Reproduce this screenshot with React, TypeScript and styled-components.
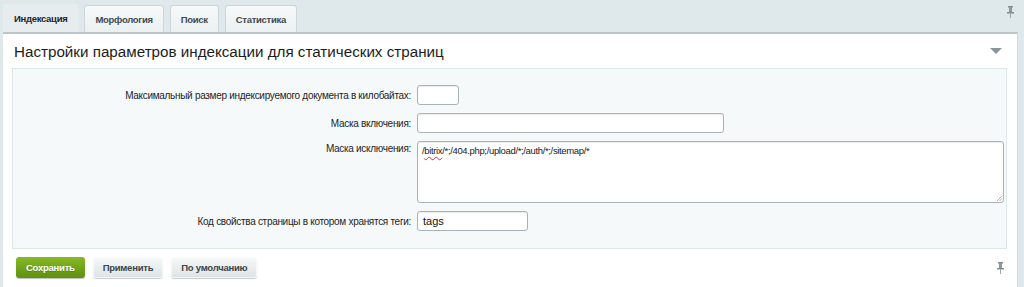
import React from "react";
import styled, { createGlobalStyle } from "styled-components";

const GlobalStyle = createGlobalStyle`
  html, body {
    margin: 0;
    padding: 0;
    background: #dfe8ea;
    font-family: "Liberation Sans", Arial, Helvetica, sans-serif;
  }
`;

const Page = styled.div`
  width: 1024px;
  height: 287px;
  overflow: hidden;
  padding: 0 6px 0 3px;
  box-sizing: border-box;
  background: #dfe8ea;
`;

const TabBar = styled.div`
  height: 32px;
  display: flex;
  align-items: flex-end;
  gap: 6px;
  position: relative;
`;

const Tab = styled.div<{ active?: boolean }>`
  height: ${(p) => (p.active ? "28px" : "27px")};
  padding: 0 10px;
  display: flex;
  align-items: center;
  box-sizing: border-box;
  font-size: 9.5px;
  letter-spacing: -0.3px;
  font-weight: bold;
  color: ${(p) => (p.active ? "#1f2529" : "#3f4b4f")};
  background: ${(p) =>
    p.active ? "#e7edee" : "linear-gradient(#f7f9f9, #ebf0f0)"};
  border: 1px solid ${(p) => (p.active ? "#e7edee" : "#cdd6d8")};
  border-bottom: none;
  border-radius: 3px 3px 0 0;
`;

const Pin = styled.svg`
  display: block;
  width: 7px;
  height: 12px;
`;

const TopPin = styled.div`
  position: absolute;
  right: 4px;
  top: 6px;
`;

const Panel = styled.div`
  background: #fff;
  border-top: 2px solid #bcc6c9;
  border-right: 1px solid #d3dcde;
  height: 255px;
  box-sizing: border-box;
  padding: 0 10px 0 9px;
  display: flex;
  flex-direction: column;
`;

const Heading = styled.div`
  height: 34px;
  display: flex;
  align-items: center;
  justify-content: space-between;
  padding: 0 5px 0 2px;
  font-size: 15.2px;
  color: #1d1d1d;
`;

const Triangle = styled.div`
  width: 0;
  height: 0;
  border-left: 6px solid transparent;
  border-right: 6px solid transparent;
  border-top: 6px solid #8c969a;
`;

const FormBox = styled.div`
  background: #f5f9f9;
  border: 1px solid #dde6e8;
  padding: 16px 0 17px;
  display: flex;
  flex-direction: column;
  gap: 8px;
`;

const Row = styled.div<{ top?: boolean }>`
  display: grid;
  grid-template-columns: 398px 1fr;
  column-gap: 6px;
  align-items: ${(p) => (p.top ? "start" : "center")};
`;

const Label = styled.div<{ top?: boolean }>`
  text-align: right;
  font-size: 10px;
  letter-spacing: -0.3px;
  color: #1e1e1e;
  padding-top: ${(p) => (p.top ? "2px" : "0")};
`;

const Input = styled.div<{ w: number }>`
  width: ${(p) => p.w}px;
  height: 20px;
  box-sizing: border-box;
  background: #fff;
  border: 1px solid #a8b3b7;
  border-radius: 3px;
  box-shadow: inset 0 1px 1px rgba(0, 0, 0, 0.08);
  font-size: 11px;
  color: #111;
  padding: 3px 5px 0;
`;

const TextArea = styled.div`
  width: 587px;
  height: 62px;
  box-sizing: border-box;
  background: #fff;
  border: 1px solid #a8b3b7;
  border-radius: 3px;
  box-shadow: inset 0 1px 1px rgba(0, 0, 0, 0.08);
  font-size: 9.5px;
  letter-spacing: -0.35px;
  color: #222;
  padding: 3px 4px 0;
  position: relative;
`;

const Squiggle = styled.span`
  text-decoration: underline wavy #e03030;
  text-decoration-thickness: 1px;
  text-underline-offset: 2px;
`;

const Grip = styled.svg`
  position: absolute;
  right: 1px;
  bottom: 1px;
  width: 6px;
  height: 6px;
`;

const Footer = styled.div`
  display: flex;
  align-items: center;
  gap: 8px;
  padding: 8px 3px 0 4px;
`;

const Button = styled.div<{ primary?: boolean }>`
  height: 21px;
  padding: 0 10px;
  display: flex;
  align-items: center;
  border-radius: 3px;
  font-size: 9.5px;
  letter-spacing: -0.25px;
  font-weight: bold;
  color: ${(p) => (p.primary ? "#fff" : "#3c4649")};
  background: ${(p) =>
    p.primary
      ? "linear-gradient(#86b925, #5f9010)"
      : "linear-gradient(#f7f9f9, #dde3e5)"};
  box-shadow: ${(p) =>
    p.primary
      ? "0 1px 1px rgba(0,0,0,0.25)"
      : "0 1px 1px rgba(0,0,0,0.2), inset 0 0 0 1px rgba(255,255,255,0.6)"};
  text-shadow: ${(p) => (p.primary ? "0 1px 0 rgba(0,0,0,0.2)" : "none")};
`;

const Spacer = styled.div`
  flex: 1;
`;

const PinIcon = () => (
  <Pin viewBox="0 0 7 12">
    <rect x="1" y="0" width="5" height="1.5" fill="#7f8b8f" />
    <rect x="2" y="1" width="3" height="5" fill="#8d999d" />
    <rect x="0" y="6" width="7" height="1.5" fill="#7f8b8f" />
    <rect x="3" y="7" width="1" height="5" fill="#9aa5a8" />
  </Pin>
);

export default function App() {
  return (
    <>
      <GlobalStyle />
      <Page>
        <TabBar>
          <Tab active>Индексация</Tab>
          <Tab>Морфология</Tab>
          <Tab>Поиск</Tab>
          <Tab>Статистика</Tab>
          <TopPin>
            <PinIcon />
          </TopPin>
        </TabBar>
        <Panel>
          <Heading>
            <span>Настройки параметров индексации для статических страниц</span>
            <Triangle />
          </Heading>
          <FormBox>
            <Row>
              <Label>Максимальный размер индексируемого документа в килобайтах:</Label>
              <Input w={42} />
            </Row>
            <Row>
              <Label>Маска включения:</Label>
              <Input w={307} />
            </Row>
            <Row top>
              <Label top>Маска исключения:</Label>
              <TextArea>
                /<Squiggle>bitrix</Squiggle>/*;/404.php;/upload/*;/auth/*;/sitemap/*
                <Grip viewBox="0 0 6 6">
                  <path d="M1 6 L6 1 M3.5 6 L6 3.5" stroke="#9aa4a7" strokeWidth="0.8" />
                </Grip>
              </TextArea>
            </Row>
            <Row>
              <Label>Код свойства страницы в котором хранятся теги:</Label>
              <Input w={111}>tags</Input>
            </Row>
          </FormBox>
          <Footer>
            <Button primary>Сохранить</Button>
            <Button>Применить</Button>
            <Button>По умолчанию</Button>
            <Spacer />
            <PinIcon />
          </Footer>
        </Panel>
      </Page>
    </>
  );
}
